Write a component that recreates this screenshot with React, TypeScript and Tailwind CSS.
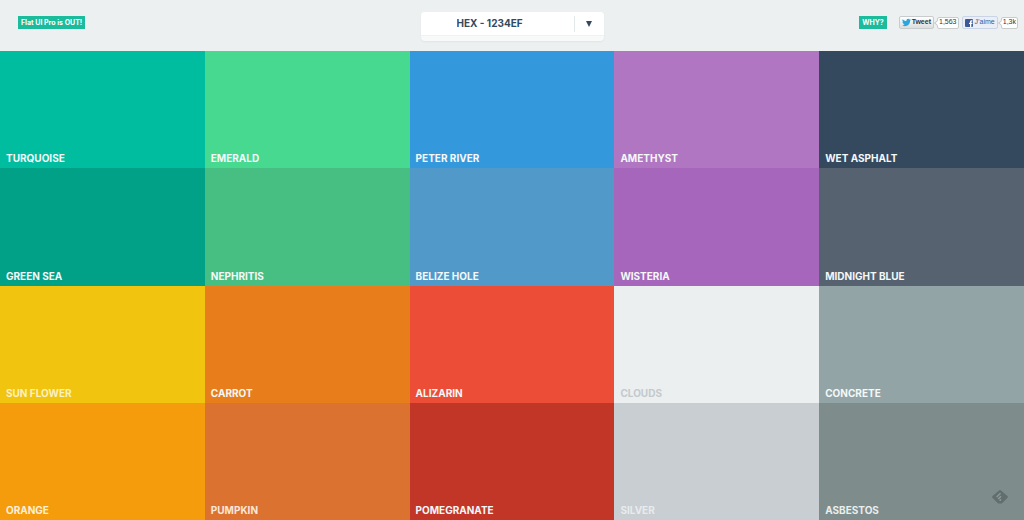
// src/App.tsx
import { FaTwitter } from "react-icons/fa";

interface Swatch {
    name: string;
    color: string;
    text?: string;
}

const swatches: Swatch[] = [
    { name: "Turquoise", color: "bg-[#00bd9f]" },
    { name: "Emerald", color: "bg-[#48d991]" },
    { name: "Peter River", color: "bg-[#3498dc]" },
    { name: "Amethyst", color: "bg-[#b076c2]" },
    { name: "Wet Asphalt", color: "bg-[#34495e]" },
    { name: "Green Sea", color: "bg-[#00a187]" },
    { name: "Nephritis", color: "bg-[#48bf82]" },
    { name: "Belize Hole", color: "bg-[#5199c9]" },
    { name: "Wisteria", color: "bg-[#a666bb]" },
    { name: "Midnight Blue", color: "bg-[#566270]" },
    { name: "Sun Flower", color: "bg-[#f1c40f]", text: "text-[#fbf0c0]" },
    { name: "Carrot", color: "bg-[#e77e1b]" },
    { name: "Alizarin", color: "bg-[#eb4d37]" },
    { name: "Clouds", color: "bg-[#ebeff0]", text: "text-[#c4c9cc]" },
    { name: "Concrete", color: "bg-[#92a4a6]" },
    { name: "Orange", color: "bg-[#f59c0c]", text: "text-[#fdf0d8]" },
    { name: "Pumpkin", color: "bg-[#dc722f]", text: "text-[#fbe6da]" },
    { name: "Pomegranate", color: "bg-[#c23628]" },
    { name: "Silver", color: "bg-[#c9ced2]", text: "text-[#e8ebed]" },
    { name: "Asbestos", color: "bg-[#7e8c8c]", text: "text-[#e9eeee]" },
];

function FormatSelect() {
    return (
        <div className="relative w-[183px] rounded-[4px] bg-[#f8fafa] pb-[5px] shadow-xs">
            <select
                aria-label="Color format"
                className="block h-6 w-full appearance-none rounded-t-[4px] border-b border-[#eff2f2] bg-white pl-9 text-[10px] font-bold text-[#34495e] outline-none"
            >
                <option>HEX - 1234EF</option>
                <option>HEX - #1234EF</option>
                <option>RGB - (1,2,3)</option>
                <option>RGBA - (1,2,3,1.0)</option>
            </select>
            <span
                aria-hidden="true"
                className="pointer-events-none absolute right-0 top-1 flex h-4 w-[30px] items-center justify-center border-l border-[#e3e8ea] text-[#34495e]"
            >
                <svg viewBox="0 0 6 6" className="size-[6px]" fill="currentColor">
                    <path d="M0 0h6L3 6z" />
                </svg>
            </span>
        </div>
    );
}

function FacebookIcon() {
    return (
        <svg viewBox="0 0 16 16" className="size-2" aria-hidden="true">
            <rect width="16" height="16" rx="2" fill="#3b5998" />
            <path d="M10 16V10h-2V7.4h2V5.6C10 3.4 11.200 2.400 13.100 2.400H15V5h-1.200c-.9 0-1.100.4-1.100 1.100v1.300H15L14.700 10h-2v6z" fill="#fff" />
        </svg>
    );
}

function ShareCount({ children }: { children: string }) {
    return (
        <span className="relative flex h-3 items-center rounded-[2px] border border-[#c8cccd] bg-white px-px text-[#333]">
            <span className="absolute -left-[3px] size-1 rotate-45 border-b border-l border-[#c8cccd] bg-white" />
            {children}
        </span>
    );
}

function ShareButtons() {
    return (
        <div className="flex items-center gap-[3px] font-['Liberation_Sans',sans-serif] text-[7px]">
            <button className="flex h-[13px] items-center gap-px rounded-[2px] border border-[#c9cccc] bg-linear-to-b from-white to-[#dedede] px-[2px] font-bold text-[#333]">
                <FaTwitter className="size-[9px] text-[#2aa6e0]" />
                Tweet
            </button>
            <ShareCount>1,563</ShareCount>
            <button className="flex h-[13px] items-center gap-[2px] rounded-[2px] border border-[#cad4e7] bg-[#eceef5] px-[2px] text-[#3b5998]">
                <FacebookIcon />
                J’aime
            </button>
            <ShareCount>1,3k</ShareCount>
        </div>
    );
}

function FeedbackMark() {
    return (
        <button aria-label="Feedback" className="fixed bottom-[15px] right-4 text-[#626e6e]">
            <svg viewBox="0 0 16 16" className="size-4">
                <path
                    d="M7 1.400a1.400 1.400 0 0 1 2 0L15.400 7a1.400 1.400 0 0 1 0 2L9.800 14.600H6.200L.6 9a1.400 1.400 0 0 1 0-2z"
                    fill="currentColor"
                />
                <path d="M8.500 4.200 4.600 8M9 7.200 6.200 10M9 10.400l-1.400 1.400" stroke="#8d9999" strokeWidth="1.500" fill="none" />
            </svg>
        </button>
    );
}

export default function App() {
    return (
        <div className="flex min-h-screen flex-col bg-[#ecf0f1] font-['Inter',sans-serif]">
            <header className="grid h-[51px] grid-cols-[1fr_auto_1fr] items-start">
                <a
                    href="#pro"
                    className="ml-[18px] mt-4 justify-self-start bg-[#1abc9c] px-[3px] text-[7px] font-bold leading-[13px] text-white"
                >
                    Flat UI Pro is OUT!
                </a>
                <div className="mt-3">
                    <FormatSelect />
                </div>
                <div className="mr-[6px] mt-4 flex items-center gap-3 justify-self-end">
                    <a
                        href="#why"
                        className="bg-[#1abc9c] px-[3px] text-[7px] font-bold leading-[13px] text-white"
                    >
                        WHY?
                    </a>
                    <ShareButtons />
                </div>
            </header>

            <main className="grid flex-1 auto-rows-fr grid-cols-5">
                {swatches.map(({ name, color, text = "text-[#f4f8f8]" }) => (
                    <button
                        key={name}
                        className={`flex cursor-pointer items-end px-[6px] pb-[2px] text-left text-[10px] font-bold uppercase leading-[15px] ${color} ${text}`}
                    >
                        {name}
                    </button>
                ))}
            </main>

            <FeedbackMark />
        </div>
    );
}
